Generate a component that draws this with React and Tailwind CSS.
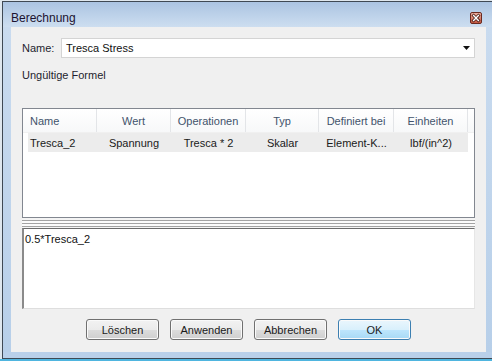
import React from "react";

const headers = [
    { label: "Name", w: "w-[74px]", align: "justify-start pl-[7px]" },
    { label: "Wert", w: "w-[74px]", align: "justify-center" },
    { label: "Operationen", w: "w-[75px]", align: "justify-center" },
    { label: "Typ", w: "w-[73px]", align: "justify-center" },
    { label: "Definiert bei", w: "w-[75px]", align: "justify-center" },
    { label: "Einheiten", w: "w-[74px]", align: "justify-center" },
];

const row = [
    { text: "Tresca_2", w: "w-[69px]", align: "justify-start pl-[2px]" },
    { text: "Spannung", w: "w-[74px]", align: "justify-center" },
    { text: "Tresca * 2", w: "w-[75px]", align: "justify-center" },
    { text: "Skalar", w: "w-[73px]", align: "justify-center" },
    { text: "Element-K...", w: "w-[75px]", align: "justify-center" },
    { text: "lbf/(in^2)", w: "w-[74px]", align: "justify-center" },
];

const buttons = ["Löschen", "Anwenden", "Abbrechen", "OK"];

const CloseIcon = () => (
    <svg width="12" height="12" viewBox="0 0 12 12">
        <defs>
            <linearGradient id="closeFill" x1="0" y1="0" x2="0" y2="1">
                <stop offset="0" stopColor="#ecb3a5" />
                <stop offset="0.5" stopColor="#d9826e" />
                <stop offset="1" stopColor="#c2533d" />
            </linearGradient>
        </defs>
        <rect x="0.5" y="0.5" width="11" height="11" rx="1.5" fill="url(#closeFill)" stroke="#6a2a20" />
        <path d="M3.6 3.6 L8.4 8.4 M8.4 3.6 L3.6 8.4" stroke="#4a1d16" strokeWidth="3" strokeLinecap="square" />
        <path d="M3.6 3.6 L8.4 8.4 M8.4 3.6 L3.6 8.4" stroke="#ffffff" strokeWidth="1.4" strokeLinecap="square" />
    </svg>
);

const App = () => {
    return (
        <div className="w-[492px] h-[361px] overflow-hidden bg-[#dfe7ee] font-['Liberation_Sans',Arial,sans-serif] text-[11px] leading-[14px]">
            {/* Window */}
            <div className="ml-[2px] mt-[1px] w-[493px] h-[358px] border border-[#3f4954] flex flex-col bg-[#bcd2eb]">

                {/* Title bar */}
                <div className="h-[25px] flex items-start justify-between bg-[linear-gradient(#abc4e2,#cddef0)]">
                    <span className="pl-[8px] pt-[9px] text-[12px] leading-[14px] text-[#1c1330]">
                        Berechnung
                    </span>
                    <div className="mt-[10px] mr-[12px] flex">
                        <CloseIcon />
                    </div>
                </div>

                {/* Body */}
                <div className="flex h-[325px]">
                    <div className="w-[8px] bg-[linear-gradient(#c9dbef,#b7cfe9)]" />

                    {/* Client area */}
                    <div className="w-[475px] bg-[#f0f0f0] flex flex-col px-[11px]">

                        {/* Name row */}
                        <div className="mt-[11px] h-[20px] flex items-center">
                            <span className="w-[39px] text-[#1e1e2e]">Name:</span>
                            <div className="w-[414px] h-[20px] bg-white border border-[#d4d4d4] flex items-center justify-between pl-[4px] pr-[4px]">
                                <span className="text-[#111]">Tresca Stress</span>
                                <svg width="7" height="4" viewBox="0 0 7 4">
                                    <path d="M0 0H7L3.5 4Z" fill="#111" />
                                </svg>
                            </div>
                        </div>

                        <div className="mt-[10px] h-[14px] text-[#1e1e2e]">Ungültige Formel</div>

                        {/* Table */}
                        <div className="mt-[26px] h-[110px] bg-white border border-[#828790] flex flex-col">
                            <div className="h-[24px] flex bg-[linear-gradient(#ffffff,#f7f8f9)] border-b border-[#f0f0f0]">
                                {headers.map((h) => (
                                    <div
                                        key={h.label}
                                        className={`${h.w} ${h.align} flex items-center border-r border-[#e3e5e8] text-[#42536b]`}
                                    >
                                        {h.label}
                                    </div>
                                ))}
                            </div>
                            <div className="ml-[5px] w-[440px] h-[19px] flex bg-[#ececec]">
                                {row.map((c) => (
                                    <div key={c.text} className={`${c.w} ${c.align} flex items-center text-[#1a1a1a]`}>
                                        {c.text}
                                    </div>
                                ))}
                            </div>
                        </div>

                        {/* Splitter */}
                        <div className="h-[10px] flex flex-col">
                            <div className="h-[2px] bg-[#f4f4f4]" />
                            <div className="h-[1px] bg-[#a3a3a3]" />
                            <div className="h-[2px] bg-[#fbfbfb]" />
                            <div className="h-[1px] bg-[#a3a3a3]" />
                            <div className="h-[2px] bg-[#fbfbfb]" />
                            <div className="h-[1px] bg-[#a3a3a3]" />
                            <div className="h-[1px] bg-[#f4f4f4]" />
                        </div>

                        {/* Formula editor */}
                        <div className="h-[81px] bg-white border-t border-l-2 border-r border-b border-t-[#6b6b6b] border-l-[#8a8a8a] border-r-[#e6e6e6] border-b-[#dedede] pl-[1px] pt-[3px] text-[#111]">
                            0.5*Tresca_2
                        </div>

                        {/* Buttons */}
                        <div className="mt-[10px] flex justify-center gap-[11px]">
                            {buttons.map((b) => (
                                <button
                                    key={b}
                                    className={`w-[73px] h-[21px] rounded-[3px] border text-[11px] text-[#1a1a1a] flex items-center justify-center shadow-[inset_0_0_0_1px_#fafafa] ${b === "OK"
                                            ? "border-[#3c7fb1] bg-[linear-gradient(#eaf6fd_0%,#d9f0fc_50%,#bee6fd_51%,#a7d9f5_100%)]"
                                            : "border-[#707070] bg-[linear-gradient(#f2f2f2_0%,#ebebeb_50%,#dddddd_51%,#cfcfcf_100%)]"
                                        }`}
                                >
                                    {b}
                                </button>
                            ))}
                        </div>
                    </div>

                    <div className="w-[8px] bg-[linear-gradient(#c9dbef,#b7cfe9)]" />
                </div>

                <div className="h-[6px] bg-[#b9d0ea]" />
            </div>
            <div className="h-[2px] bg-[#4fb5df]" />
        </div>
    );
};

export default App;
